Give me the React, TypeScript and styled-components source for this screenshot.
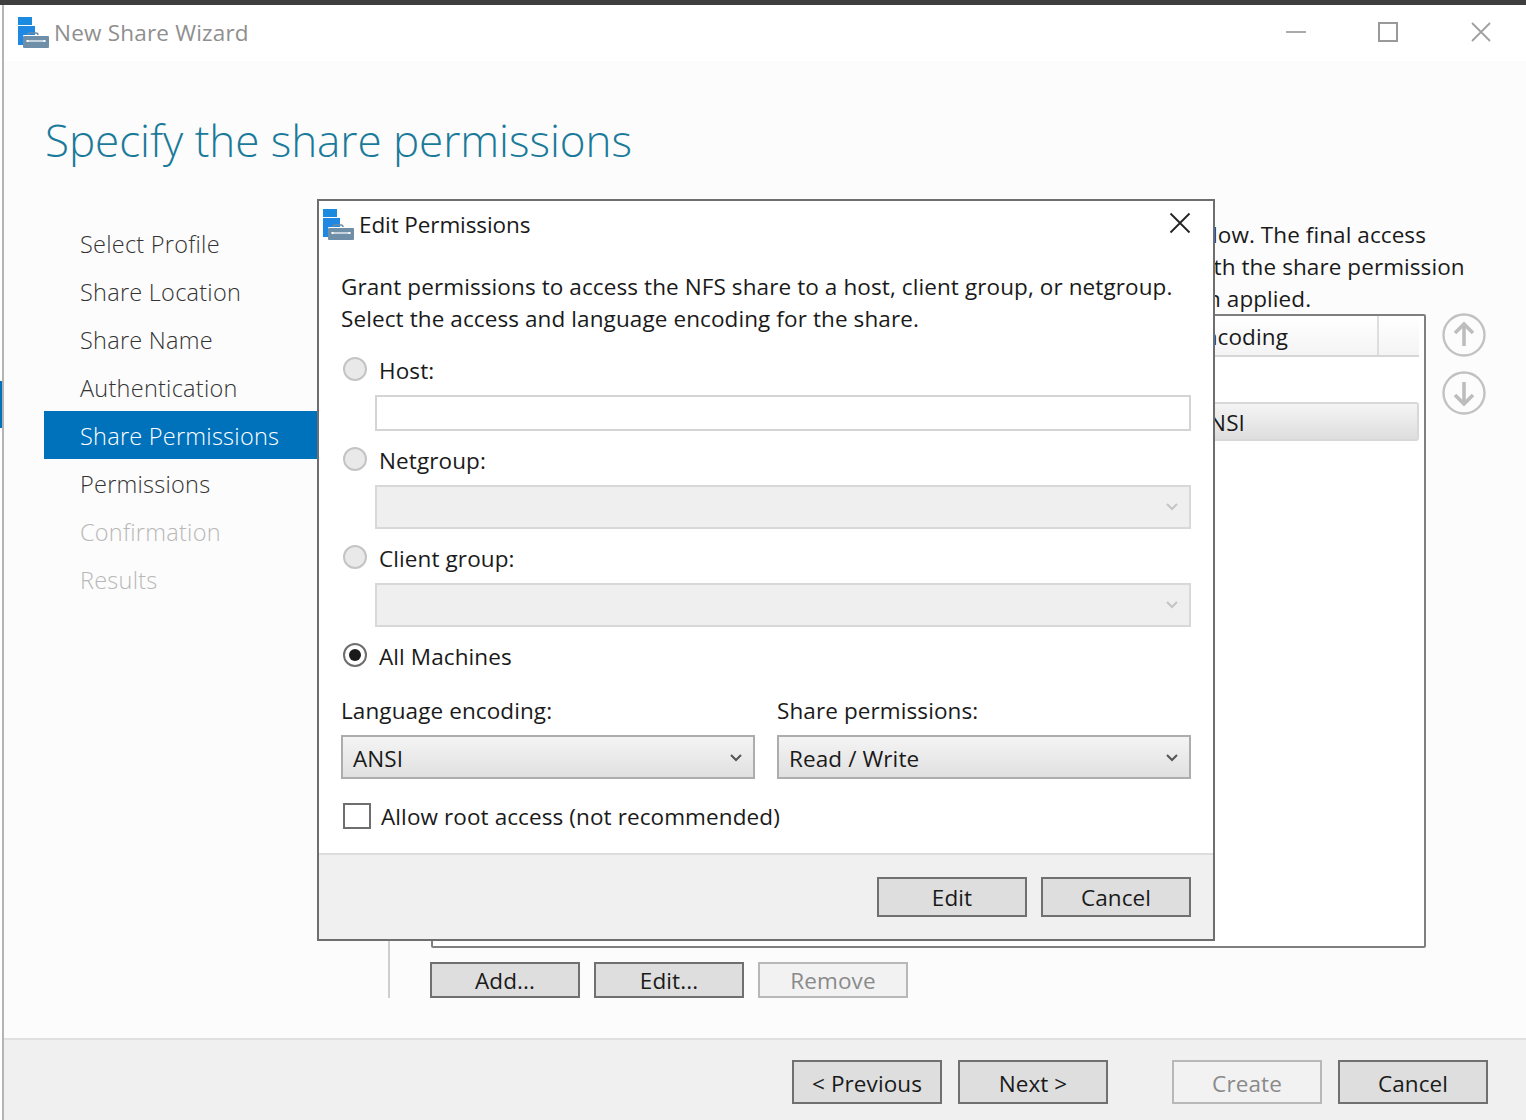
import React from "react";
import styled, { createGlobalStyle } from "styled-components";

const Global = createGlobalStyle`
  html, body { margin: 0; padding: 0; background: #fcfcfc; }
  body { font-family: "Open Sans", "Noto Sans", "Liberation Sans", sans-serif; color: #1a1a1a; }
  * { box-sizing: border-box; }
`;

const Page = styled.div`
  width: 1526px; height: 1120px; position: relative; overflow: hidden;
  display: flex; flex-direction: column; background: #fcfcfc;
`;
const TopEdge = styled.div`height: 5px; background: #3f3f3f; flex: none;`;
const Frame = styled.div`flex: 1; display: flex; min-height: 0;`;
const LeftEdge = styled.div`
  width: 4px; flex: none; border-right: 2px solid #b4b4b4;
  background: linear-gradient(to bottom, #fff 0, #fff 376px, #0072bc 376px, #0072bc 423px, #fff 423px);
`;
const Win = styled.div`flex: 1; display: flex; flex-direction: column; min-width: 0;`;
const TitleBar = styled.div`
  height: 56px; flex: none; background: #fff; display: flex; align-items: center;
  padding-left: 14px; gap: 4px; color: #8f8f8f; font-size: 22.5px;
`;
const TitleText = styled.span`flex: 1; letter-spacing: 0.2px; margin-top: -1px;`;
const WinButton = styled.button`
  width: 92px; height: 56px; border: 0; background: none; padding: 0; display: flex;
  align-items: center; justify-content: center; margin-top: -2px;
`;
const WinButtons = styled.div`display: flex; padding-right: 0;`;
const Heading = styled.h1`
  margin: 0; height: 160px; padding: 44px 0 0 41px; font-weight: 300; font-size: 44px; line-height: 70px;
  color: #1a7a9a; letter-spacing: -0.05px; flex: none;
`;
const Body = styled.div`height: 777px; flex: none; display: flex;`;
const Nav = styled.nav`
  margin-left: 40px; width: 346px; flex: none; border-right: 2px solid #cfcfcf; margin-top: -2px;
`;
const NavItem = styled.div<{ $state?: "active" | "off" }>`
  height: 48px; line-height: 51px; padding-left: 36px; font-weight: 300; font-size: 23.5px; letter-spacing: 0.25px;
  background: ${(p) => (p.$state === "active" ? "#0072bc" : "transparent")};
  color: ${(p) => (p.$state === "active" ? "#fff" : p.$state === "off" ? "#b8b8b8" : "#333")};
`;
const Content = styled.div`flex: 1; padding: 0 0 0 41px; margin-top: -2px; min-width: 0;`;
const Intro = styled.div`height: 95px;`;
const IntroLine = styled.div<{ $indent: number }>`
  height: 32px; line-height: 32px; font-size: 22.5px; white-space: nowrap; padding-left: ${(p) => p.$indent}px;
  letter-spacing: 0.08px;
`;
const TableRow = styled.div`display: flex; gap: 16px; align-items: flex-start;`;
const Table = styled.div`
  width: 995px; height: 634px; flex: none; border: 2px solid #7f7f7f; border-radius: 2px;
  background: #fff; padding: 0 5px 0 0;
`;
const TableHead = styled.div`
  height: 41px; border-bottom: 2px solid #d6d6d6; display: flex; justify-content: flex-end;
  background: linear-gradient(#fff, #f4f4f4); font-size: 22.5px; line-height: 42px; letter-spacing: 0.1px;
`;
const HeadCell = styled.div`
  width: 42px; border-left: 2px solid #dedede;
`;
const HeadLabel = styled.div`width: 290px; text-align: right; padding-right: 89px;`;
const Row = styled.div`
  margin-top: 45px; height: 39px; border: 2px solid #d8d8d8; border-radius: 3px; font-size: 22.5px; line-height: 38px;
  background: linear-gradient(#f4f4f4, #dedede); text-align: right; padding-right: 172px; letter-spacing: 0.1px;
`;
const ArrowCol = styled.div`display: flex; flex-direction: column; gap: 14px; margin-top: -1px;`;
const ContentButtons = styled.div`display: flex; gap: 14px; margin: 14px 0 0 -1px;`;
const Btn = styled.button<{ $off?: boolean; $h?: number }>`
  width: 150px; height: ${(p) => p.$h ?? 36}px; padding: ${(p) => (p.$h === 44 ? 4 : 2)}px 0 0; font: inherit; font-size: 22.5px; line-height: 1;
  letter-spacing: 0.1px;
  background: ${(p) => (p.$off ? "#f2f2f2" : "#dedede")};
  border: 2px solid ${(p) => (p.$off ? "#b8b8b8" : "#707070")};
  color: ${(p) => (p.$off ? "#8a8a8a" : "#1a1a1a")};
`;
const Footer = styled.div`
  flex: 1; margin-top: 40px; border-top: 2px solid #e0e0e0; background: #f0f0f0;
  display: flex; justify-content: flex-end; gap: 16px; padding: 20px 38px 0 0;
`;
const Spacer = styled.div`width: 32px;`;

const Dialog = styled.div`
  position: absolute; left: 317px; top: 199px; width: 898px; height: 742px;
  border: 2px solid #6e6e6e; background: #fff; display: flex; flex-direction: column;
`;
const DlgTitle = styled.div`
  height: 48px; flex: none; display: flex; align-items: center; padding-left: 4px; gap: 4px; font-size: 22.5px; letter-spacing: -0.1px;
`;
const DlgTitleText = styled.span`flex: 1; margin-top: -2px;`;
const CloseBtn = styled.button`
  width: 66px; height: 48px; border: 0; background: none; padding: 0; margin-top: -4px;
  display: flex; align-items: center; justify-content: center;
`;
const DlgBody = styled.div`flex: 1; padding: 22px 22px 0; font-size: 22.5px; letter-spacing: 0.1px;`;
const Para = styled.p`margin: 0 0 18px; line-height: 32px;`;
const RadioRow = styled.label`display: flex; align-items: center; height: 32px; gap: 12px; padding: 2px 0 0 2px; margin-top: 12px;`;
const Radio = styled.span<{ $on?: boolean }>`
  width: 24px; height: 24px; border-radius: 50%; flex: none; display: flex; align-items: center; justify-content: center;
  border: 2px solid ${(p) => (p.$on ? "#6e6e6e" : "#c4c4c4")};
  background: ${(p) => (p.$on ? "#fff" : "#e9e9e9")};
  margin-top: -2px;
  &::after { content: ""; display: ${(p) => (p.$on ? "block" : "none")}; width: 12px; height: 12px; border-radius: 50%; background: #1a1a1a; }
`;
const TextBox = styled.div`
  margin: 10px 0 0 34px; height: 36px; border: 2px solid #d4d4d4; background: #fff;
`;
const DisabledSelect = styled.div`
  margin: 10px 0 0 34px; height: 44px; border: 2px solid #d8d8d8; background: #efefef;
  display: flex; align-items: center; justify-content: flex-end; padding-right: 10px;
`;
const Grid = styled.div`display: grid; grid-template-columns: 414px 414px; column-gap: 22px; margin-top: 24px;`;
const FieldLabel = styled.div`height: 32px; line-height: 32px; margin-bottom: 8px;`;
const Select = styled.div`
  height: 44px; border: 2px solid #adadad; background: linear-gradient(#f4f4f4, #e0e0e0);
  display: flex; align-items: center; justify-content: space-between; padding: 2px 10px 0 10px;
`;
const CheckRow = styled.label`display: flex; align-items: center; height: 32px; gap: 10px; margin-top: 21px; padding-left: 2px;`;
const Check = styled.span`width: 28px; height: 26px; border: 2px solid #6e6e6e; background: #fff; flex: none;`;
const DlgFooter = styled.div`
  height: 86px; flex: none; border-top: 2px solid #dcdcdc; background: #f0f0f0;
  display: flex; justify-content: flex-end; gap: 14px; padding: 22px 22px 0 0;
`;

const ShareIcon = ({ s = 32 }: { s?: number }) => (
  <svg width={s} height={s} viewBox="0 0 32 32" aria-hidden="true">
    <rect x="0" y="0" width="14" height="8" fill="#1b8be0" />
    <rect x="0" y="9" width="14" height="19" fill="#1f88e2" />
    <rect x="14" y="9" width="3" height="10" fill="#1f88e2" />
    <path d="M10 21v-3a2 2 0 0 1 2-2h6a2 2 0 0 1 2 2v1" fill="none" stroke="#6f8ea6" strokeWidth="1.5" />
    <rect x="5" y="18" width="26" height="13" rx="1" fill="#fff" />
    <rect x="5" y="19" width="26" height="12" rx="1" fill="#6f8fa8" />
    <path d="M9 24h18" stroke="#fff" strokeWidth="1.2" />
    <rect x="8.5" y="23" width="2" height="2" fill="#fff" />
    <rect x="25.5" y="23" width="2" height="2" fill="#fff" />
  </svg>
);
const Chevron = ({ c }: { c: string }) => (
  <svg width="14" height="10" viewBox="0 0 14 10" aria-hidden="true">
    <path d="M2 2l5 5 5-5" fill="none" stroke={c} strokeWidth="2" />
  </svg>
);
const CircleArrow = ({ up }: { up?: boolean }) => (
  <svg width="44" height="44" viewBox="0 0 44 44" aria-hidden="true">
    <circle cx="22" cy="22" r="20.5" fill="none" stroke="#c2c2c2" strokeWidth="2.4" />
    {up ? (
      <path d="M22 33V12M13 20l9-9 9 9" fill="none" stroke="#bdbdbd" strokeWidth="3.6" />
    ) : (
      <path d="M22 11v21M13 24l9 9 9-9" fill="none" stroke="#bdbdbd" strokeWidth="3.6" />
    )}
  </svg>
);

const navItems: { t: string; s?: "active" | "off" }[] = [
  { t: "Select Profile" },
  { t: "Share Location" },
  { t: "Share Name" },
  { t: "Authentication" },
  { t: "Share Permissions", s: "active" },
  { t: "Permissions" },
  { t: "Confirmation", s: "off" },
  { t: "Results", s: "off" },
];

export default function App() {
  return (
    <Page>
      <Global />
      <TopEdge />
      <Frame>
        <LeftEdge />
        <Win>
          <TitleBar>
            <ShareIcon />
            <TitleText>New Share Wizard</TitleText>
            <WinButtons>
              <WinButton aria-label="Minimize">
                <svg width="22" height="4" viewBox="0 0 22 4"><path d="M1 2h20" stroke="#aaa" strokeWidth="2" /></svg>
              </WinButton>
              <WinButton aria-label="Maximize">
                <svg width="22" height="22" viewBox="0 0 22 22"><rect x="2" y="2" width="18" height="18" fill="none" stroke="#999" strokeWidth="2" /></svg>
              </WinButton>
              <WinButton aria-label="Close">
                <svg width="22" height="22" viewBox="0 0 22 22"><path d="M3 2l18 18M21 2L3 20" stroke="#a0a0a0" strokeWidth="1.8" /></svg>
              </WinButton>
            </WinButtons>
          </TitleBar>
          <Heading>Specify the share permissions</Heading>
          <Body>
            <Nav>
              {navItems.map((n) => (
                <NavItem key={n.t} $state={n.s}>{n.t}</NavItem>
              ))}
            </Nav>
            <Content>
              <Intro>
                <IntroLine $indent={781}>low. The final access</IntroLine>
                <IntroLine $indent={769}>oth the share permission</IntroLine>
                <IntroLine $indent={776}>n applied.</IntroLine>
              </Intro>
              <TableRow>
                <Table>
                  <TableHead>
                    <HeadLabel>Encoding</HeadLabel>
                    <HeadCell />
                  </TableHead>
                  <Row>ANSI</Row>
                </Table>
                <ArrowCol>
                  <CircleArrow up />
                  <CircleArrow />
                </ArrowCol>
              </TableRow>
              <ContentButtons>
                <Btn>Add...</Btn>
                <Btn>Edit...</Btn>
                <Btn $off>Remove</Btn>
              </ContentButtons>
            </Content>
          </Body>
          <Footer>
            <Btn $h={44}>&lt; Previous</Btn>
            <Btn $h={44}>Next &gt;</Btn>
            <Spacer />
            <Btn $h={44} $off>Create</Btn>
            <Btn $h={44}>Cancel</Btn>
          </Footer>
        </Win>
      </Frame>
      <Dialog>
        <DlgTitle>
          <ShareIcon />
          <DlgTitleText>Edit Permissions</DlgTitleText>
          <CloseBtn aria-label="Close">
            <svg width="22" height="22" viewBox="0 0 22 22"><path d="M1.5 1.5l19 19M20.5 1.5l-19 19" stroke="#222" strokeWidth="1.8" /></svg>
          </CloseBtn>
        </DlgTitle>
        <DlgBody>
          <Para>
            Grant permissions to access the NFS share to a host, client group, or netgroup.<br />
            Select the access and language encoding for the share.
          </Para>
          <RadioRow><Radio />Host:</RadioRow>
          <TextBox />
          <RadioRow><Radio />Netgroup:</RadioRow>
          <DisabledSelect><Chevron c="#c4c4c4" /></DisabledSelect>
          <RadioRow><Radio />Client group:</RadioRow>
          <DisabledSelect><Chevron c="#c4c4c4" /></DisabledSelect>
          <RadioRow><Radio $on />All Machines</RadioRow>
          <Grid>
            <div>
              <FieldLabel>Language encoding:</FieldLabel>
              <Select>ANSI<Chevron c="#555" /></Select>
            </div>
            <div>
              <FieldLabel>Share permissions:</FieldLabel>
              <Select>Read / Write<Chevron c="#555" /></Select>
            </div>
          </Grid>
          <CheckRow><Check />Allow root access (not recommended)</CheckRow>
        </DlgBody>
        <DlgFooter>
          <Btn $h={40}>Edit</Btn>
          <Btn $h={40}>Cancel</Btn>
        </DlgFooter>
      </Dialog>
    </Page>
  );
}
